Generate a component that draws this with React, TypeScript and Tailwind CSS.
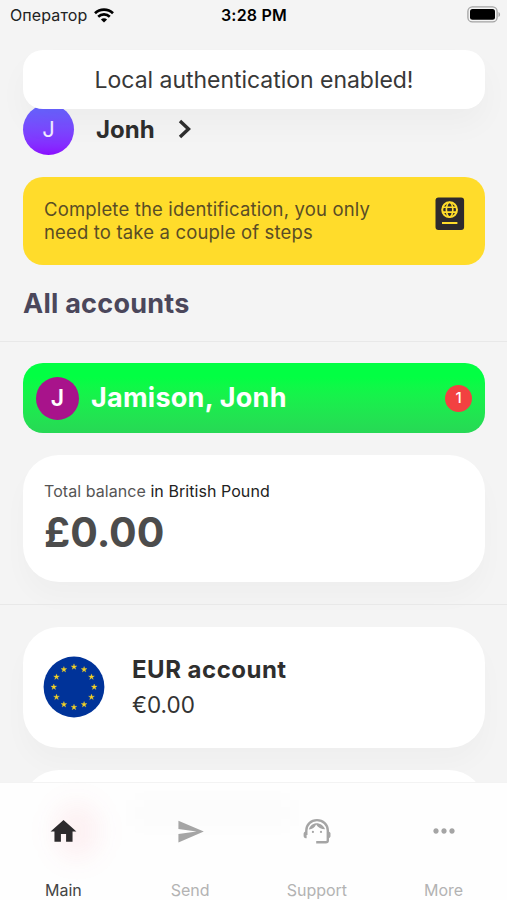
import { MdHome, MdMoreHoriz, MdSend } from "react-icons/md";
import type { ComponentType } from "react";

const tabs: { label: string; icon: ComponentType<{ size?: number }>; size: number; active?: boolean }[] = [
  { label: "Main", icon: MdHome, size: 31, active: true },
  { label: "Send", icon: MdSend, size: 29 },
  { label: "Support", icon: HeadsetIcon, size: 28 },
  { label: "More", icon: MdMoreHoriz, size: 32 },
];

function HeadsetIcon({ size = 28 }: { size?: number }) {
  return (
    <svg width={size} height={size} viewBox="0 0 28 28" fill="currentColor">
      <path
        d="M3.3 18V13.5C3.3 7.4 8 3.1 14 3.1C20 3.1 24.8 7.4 24.8 13.5V23.2C24.8 24.6 24.2 25.3 22.8 25.3H13.2"
        fill="none"
        stroke="currentColor"
        strokeWidth="2.4"
      />
      <path d="M3.6 14.4V21.2H2.8C1.4 21.2 0.6 20.2 0.6 19V16.8C0.6 15.4 1.4 14.4 2.8 14.4Z" />
      <path d="M24.6 14.4V21.2H25.3C26.7 21.2 27.5 20.2 27.5 19V16.8C27.5 15.4 26.7 14.4 25.3 14.4Z" />
      <path d="M5.9 12.6C6.5 9.4 9.5 6.4 13 6.2C17.5 6.1 21 8.8 22 12.2C18.2 12.2 14.9 10.4 13.1 7.4C11.9 10.2 9.3 12 5.9 12.6Z" />
      <circle cx="9.9" cy="14.9" r="1.1" />
      <circle cx="18" cy="14.9" r="1.1" />
    </svg>
  );
}

function WifiIcon() {
  return (
    <svg width="20" height="15" viewBox="0 0 20 15" fill="none" stroke="#000" strokeWidth="2.7">
      <path d="M1 5.2C6 0.4 14 0.4 19 5.2" />
      <path d="M4.2 8.7C7.5 5.6 12.5 5.6 15.8 8.7" />
      <path d="M10 14.6L6.9 11.5C8.6 9.9 11.4 9.9 13.1 11.5Z" fill="#000" stroke="none" />
    </svg>
  );
}

function BatteryIcon() {
  return (
    <svg width="34" height="17" viewBox="0 0 34 17">
      <rect x="0.9" y="0.9" width="29.2" height="15" rx="4.5" fill="none" stroke="#a3a3a3" strokeWidth="1.3" />
      <rect x="3" y="3" width="25" height="10.8" rx="2.5" />
      <path d="M31.5 6C33.6 7 33.6 10 31.5 11Z" fill="#a3a3a3" />
    </svg>
  );
}

function PassportIcon() {
  return (
    <svg className="-mt-px" width="30" height="34" viewBox="0 0 30 34" fill="none" stroke="#ffdc2b">
      <rect x="0.5" y="0.6" width="28.6" height="32.4" rx="3" fill="#2e2a2d" stroke="none" />
      <circle cx="14.6" cy="12.7" r="7.4" strokeWidth="2" />
      <ellipse cx="14.6" cy="12.7" rx="3.2" ry="7.4" strokeWidth="1.6" />
      <path d="M7.5 10.3H21.7M7.5 15.1H21.7" strokeWidth="1.6" />
      <path d="M7 26H22.4" strokeWidth="2" />
    </svg>
  );
}

function EuFlag() {
  return (
    <svg width="62" height="62" viewBox="-31 -31 62 62">
      <circle r="30.4" fill="#003399" />
      {Array.from({ length: 12 }).map((_, index) => (
        <path
          key={index}
          d="M0 -3L0.7 -0.9H2.9L1.1 0.4L1.8 2.5L0 1.2L-1.8 2.5L-1.1 0.4L-2.9 -0.9H-0.7Z"
          fill="#f5d327"
          stroke="#f5d327"
          strokeWidth="0.3"
          transform={`translate(${20.2 * Math.sin((index * Math.PI) / 6)} ${-20.2 * Math.cos((index * Math.PI) / 6)})`}
        />
      ))}
    </svg>
  );
}

function StatusBar() {
  return (
    <div className="grid h-[30px] grid-cols-3 items-center pl-[10px] pr-[6px] text-black">
      <div className="flex items-center gap-[7px]">
        <span className="text-[16px] tracking-[0.1px] text-[#222]">Оператор</span>
        <WifiIcon />
      </div>
      <span className="pr-[3px] text-center text-[16px] font-semibold tracking-[0.2px]">3:28 PM</span>
      <div className="flex justify-end pb-px">
        <BatteryIcon />
      </div>
    </div>
  );
}

function Toast() {
  return (
    <div className="absolute left-[23px] right-[22px] top-[50px] flex h-[59px] items-center justify-center rounded-[20px] bg-white pt-px text-[23px] tracking-[-0.03px] text-[#383838] shadow-[0_16px_30px_rgba(0,0,0,0.03)]">
      Local authentication enabled!
    </div>
  );
}

function TabBar() {
  return (
    <nav className="absolute inset-x-0 bottom-0 grid h-[118px] grid-cols-4 border-t border-[#f3f3f3] bg-[#fefefe]">
      <div className="absolute left-[55px] top-[20px] h-[56px] w-[44px] rounded-full bg-[#f3364f]/7 blur-[13px]" />
      <div className="absolute left-[135px] top-[17px] h-[26px] w-[155px] bg-black/1 blur-[10px]" />
      {tabs.map(({ label, icon: Icon, size, active }) => (
        <div
          key={label}
          className={`relative flex flex-col items-center pt-[32px] ${active ? "text-[#2d2b2d]" : "text-[#a5a5a5]"}`}
        >
          <div className="flex h-8 items-center pl-px">
            <Icon size={size} />
          </div>
          <span className={`mt-[31px] text-[16px] leading-6 ${active ? "text-[#444]" : "text-[#b3b3b3]"}`}>
            {label}
          </span>
        </div>
      ))}
    </nav>
  );
}

export default function App() {
  return (
    <div className="relative h-[900px] w-[507px] overflow-hidden bg-[#f4f4f4] font-['Inter',sans-serif]">
      <StatusBar />

      <div className="ml-[23px] mr-[22px] mt-[73px] flex h-[52px] items-center">
        <div className="flex size-[51px] items-center justify-center rounded-full bg-linear-to-b from-[#6267ff] to-[#8a08ff] text-[22px] text-white/90">
          J
        </div>
        <span className="ml-[22px] pt-px text-[24px] font-bold text-[#2e2e2e]">Jonh</span>
        <svg className="ml-[23px]" width="14" height="20" viewBox="0 0 14 20" fill="none" stroke="#2e2e2e" strokeWidth="3.4">
          <path d="M2 2L10.5 10L2 18" />
        </svg>
      </div>

      <div className="ml-[23px] mr-[22px] mt-[21.5px] flex h-[88.5px] justify-between rounded-[20px] bg-[#ffdc2b] pl-[21px] pr-[20px] pt-[21px]">
        <p className="text-[18.5px] leading-[23px] tracking-[0.16px] text-[#5a4d25]">
          Complete the identification, you only
          <br />
          need to take a couple of steps
        </p>
        <PassportIcon />
      </div>

      <h1 className="ml-[23px] mt-[21px] text-[27px] leading-9 font-bold tracking-[0.25px] text-[#4b475b]">
        All accounts
      </h1>

      <section className="mt-[19px] border-t border-[#e8e8e8] pl-[23px] pr-[22px] pt-[21px]">
        <div className="flex h-[70px] items-center rounded-[20px] bg-linear-to-b from-[#02ff43] from-20% to-[#27d855] px-[13px]">
          <div className="flex size-[43px] items-center justify-center rounded-full bg-[#a8138b] text-[23px] font-semibold text-white">
            J
          </div>
          <span className="ml-[12px] pt-px text-[27px] font-bold tracking-[0.25px] text-white">Jamison, Jonh</span>
          <span className="ml-auto flex size-[27px] items-center justify-center rounded-full bg-[#f24141] text-[15px] font-medium text-white">
            1
          </span>
        </div>

        <div className="mt-[22px] h-[127px] rounded-[36px] bg-white px-[21px] pt-[25px] shadow-[0_16px_26px_rgba(0,0,0,0.025)]">
          <p className="text-[16px] leading-[22px] tracking-[0.06px] text-[#222]">
            <span className="text-[#555]">Total balance</span> in British Pound
          </p>
          <p className="mt-[6px] text-[41px] leading-[48px] font-bold text-[#4c4c4c]">£0.00</p>
        </div>
      </section>

      <section className="mt-[22px] border-t border-[#e8e8e8] pl-[23px] pr-[22px] pt-[22px]">
        <div className="flex h-[121px] items-center rounded-[36px] bg-white px-[20px] pb-px shadow-[0_16px_26px_rgba(0,0,0,0.025)]">
          <EuFlag />
          <div className="ml-[27px]">
            <p className="text-[24px] leading-[36px] font-bold tracking-[0.5px] text-[#2e2e2e]">EUR account</p>
            <p className="text-[22.5px] leading-[34px] text-[#333]">€0.00</p>
          </div>
        </div>
        <div className="mt-[22px] h-[121px] rounded-[36px] bg-white" />
      </section>

      <Toast />
      <TabBar />
    </div>
  );
}
